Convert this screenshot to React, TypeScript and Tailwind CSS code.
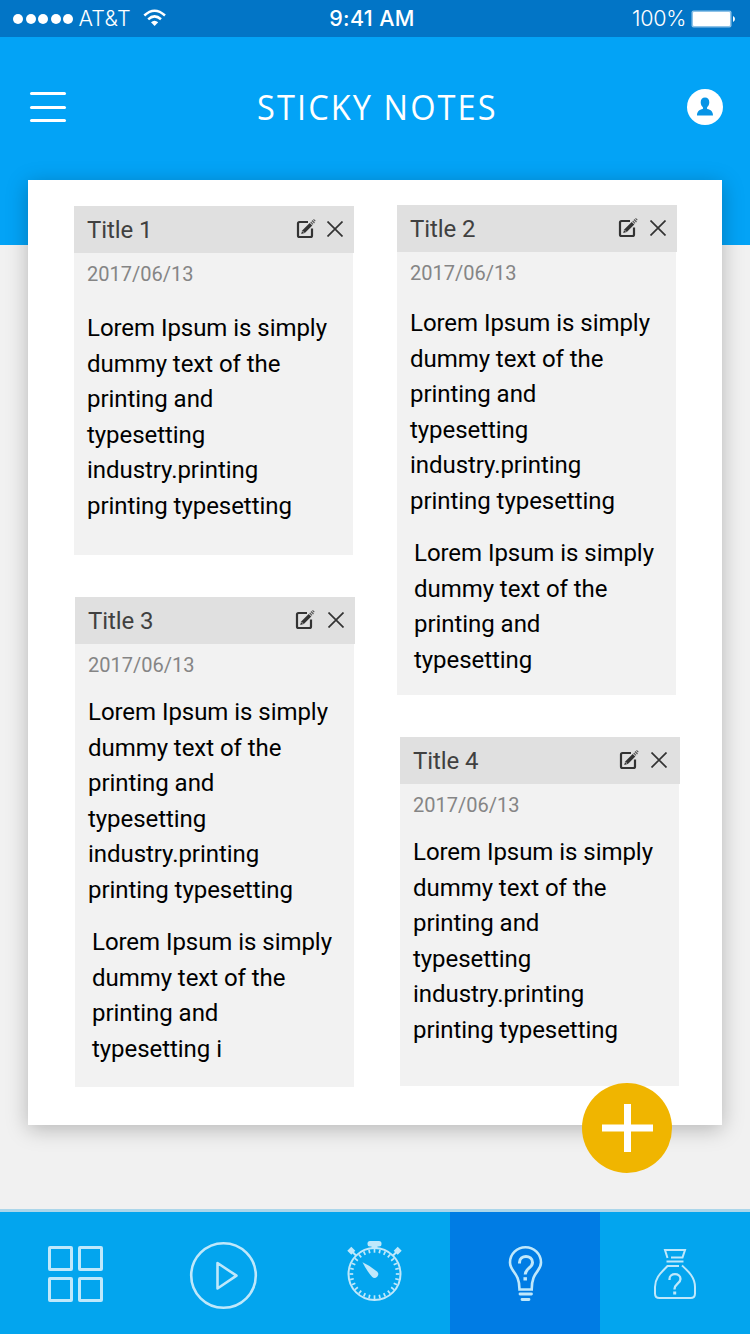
import React from "react";

const LOREM = [
  "Lorem Ipsum is simply",
  "dummy text of the",
  "printing and",
  "typesetting",
  "industry.printing",
  "printing typesetting",
];

function Lines({ lines, className = "" }: { lines: string[]; className?: string }) {
  return (
    <p className={`text-[24px] leading-[35.6px] tracking-[-0.05px] whitespace-nowrap text-black ${className}`}>
      {lines.map((line, i) => (
        <span key={i} className="block">
          {line}
        </span>
      ))}
    </p>
  );
}

function EditIcon() {
  return (
    <svg width="20" height="20" viewBox="0 0 20 20" fill="none" className="shrink-0">
      <path
        d="M12 3H3.500A1.500 1.500 0 0 0 2 4.500V16.500A1.500 1.500 0 0 0 3.500 18H14.500A1.500 1.500 0 0 0 16 16.500V9.500"
        stroke="#333"
        strokeWidth="2.200"
      />
      <path d="M5.200 15l1-3.500 7.500-7.500 2.600 2.600-7.500 7.500z" fill="#333" />
      <path d="M14.700 3l2.300 2.300M16 1.500l2.500 2.500M17.500 .4l1.800 1.800" stroke="#555" strokeWidth="1.100" />
      <path d="M6.200 11.800l2 2" stroke="#e0e0e0" strokeWidth=".8" />
    </svg>
  );
}

function CloseIcon() {
  return (
    <svg width="16" height="16" viewBox="0 0 16 16" fill="none" className="shrink-0">
      <path d="M.5 .5l15 15M15.500 .5l-15 15" stroke="#333" strokeWidth="1.700" />
    </svg>
  );
}

interface NoteProps {
  title: string;
  className: string;
  actions: string;
  textTop: string;
  more?: string[];
}

function Note({ title, className, actions, textTop, more }: NoteProps) {
  return (
    <article className={`flex w-[280px] flex-col ${className}`}>
      <header className="flex h-[47px] shrink-0 items-center justify-between bg-[#e0e0e0] pl-[13px]">
        <h2 className="pt-px text-[24px] leading-[47px] tracking-[-0.1px] text-[#404040]">{title}</h2>
        <div className={`flex items-center pb-[2px] ${actions}`}>
          <EditIcon />
          <CloseIcon />
        </div>
      </header>
      <div className="w-[279px] grow bg-[#f2f2f2] pl-[13px]">
        <time className="block pt-[9px] text-[20px] leading-6 text-[#858585]">2017/06/13</time>
        <Lines lines={LOREM} className={textTop} />
        {more && <Lines lines={more} className="mt-[16.4px] ml-1" />}
      </div>
    </article>
  );
}

function StatusBar() {
  return (
    <div className="grid h-[37px] shrink-0 grid-cols-3 items-center bg-[#0275c6] font-['Inter','Liberation_Sans',sans-serif] text-[22px] leading-[37px] text-white">
      <div className="flex items-center pl-[13px]">
        <div className="flex gap-[2.600px]">
          {[0, 1, 2, 3, 4].map((i) => (
            <span key={i} className="size-[10px] rounded-full bg-white" />
          ))}
        </div>
        <span className="ml-[5px] w-[53px] text-[21.500px] font-light tracking-[0.3px]">AT&amp;T</span>
        <svg width="24" height="18" viewBox="0 0 24 18" fill="none" className="mb-[2px] ml-[12px]">
          <path d="M1.300 6.500Q11.500-3 22 6.500M5.200 10.300Q11.500 4.500 18 10.300" stroke="#fff" strokeWidth="2.500" />
          <path d="M8 13.200Q11.500 10.200 15.200 13.200L11.600 17z" fill="#fff" />
        </svg>
      </div>
      <span className="pr-[6px] text-center text-[21.500px] font-medium tracking-[0.35px]">9:41 AM</span>
      <div className="flex items-center justify-end pr-[15px]">
        <span className="text-[21.500px] font-light tracking-[-0.3px]">100%</span>
        <svg width="44" height="18" viewBox="0 0 44 18" className="ml-[5px]">
          <rect x=".5" y=".5" width="40" height="17" rx="2" fill="#8fc3e8" />
          <rect x="2" y="2" width="37" height="14" rx="1" fill="#fff" />
          <path d="M42 6q2 1 2 3t-2 3z" fill="#fff" />
        </svg>
      </div>
    </div>
  );
}

function GridIcon() {
  return (
    <svg width="150" height="122" viewBox="0 0 150 122" fill="none" stroke="#bfe8fb" strokeWidth="3">
      <rect x="49.500" y="35.500" width="22" height="22" rx=".5" />
      <rect x="79.500" y="35.500" width="22" height="22" rx=".5" />
      <rect x="49.500" y="66.500" width="22" height="22" rx=".5" />
      <rect x="79.500" y="66.500" width="22" height="22" rx=".5" />
    </svg>
  );
}

function PlayIcon() {
  return (
    <svg width="150" height="122" viewBox="0 0 150 122" fill="none" stroke="#bfe8fb" strokeWidth="2.600">
      <circle cx="73.500" cy="63.500" r="32.300" />
      <path d="M67.500 51v25.500L86.500 63.700z" strokeLinejoin="round" />
    </svg>
  );
}

function StopwatchIcon() {
  const ticks = Array.from({ length: 28 }, (_, i) => i);
  return (
    <svg width="150" height="122" viewBox="0 0 150 122" fill="none" stroke="#bfe8fb">
      <circle cx="74.500" cy="62" r="26" strokeWidth="2" />
      {ticks.map((i) => (
        <path key={i} d="M74.500 37v3.700" strokeWidth="1.700" transform={`rotate(${(i * 360) / 28} 74.500 62)`} />
      ))}
      <rect x="67.500" y="29" width="14" height="5.500" rx="2.500" fill="#bfe8fb" stroke="none" />
      <path d="M71.500 34h6v3h-6z" fill="#bfe8fb" stroke="none" />
      <path d="M56 43.500l-4-4M93 43.500l4-4" strokeWidth="2" />
      <path d="M51.300 34.800l4 4-4 4-4-4zM97.700 34.800l4 4-4 4-4-4z" fill="#bfe8fb" stroke="none" />
      <path d="M62.500 50.200Q70 53.500 77 59.500A3.600 3.600 0 1 1 72 64.800Q66.500 58.500 62.500 50.200z" fill="#bfe8fb" stroke="none" />
    </svg>
  );
}

function BulbIcon() {
  return (
    <svg width="150" height="122" viewBox="0 0 150 122" fill="none" stroke="#bfe8fb" strokeWidth="2.600">
      <path d="M69.500 77.500H81.700C81.700 59 91 60 91 50.500A15.500 15.300 0 0 0 60 50.500C60 60 69.500 60 69.500 77.500z" />
      <path d="M69.500 51.500v-1c0-8 13-8 13 0 0 5.500-7.300 6-7.300 12" strokeWidth="3" />
      <path d="M75.200 65.200v3.300" strokeWidth="3.500" />
      <path d="M70 82h11.500M72 87.500h7" strokeWidth="2.800" strokeLinecap="round" />
    </svg>
  );
}

function BagIcon() {
  return (
    <svg width="150" height="122" viewBox="0 0 150 122" fill="none" stroke="#bfe8fb" strokeWidth="2">
      <path d="M67.500 46L65 38h20l-2.500 7.500H71M66.500 49.500h17" />
      <path d="M79 54H67.500C62 60 55 65 55 75v6.500Q55 86 59.500 86H90.500Q95 86 95 81.500V75C95 65 88 59 82 53.500" />
      <path d="M69.500 68v-1c0-6.500 11-6.500 11 0 0 4.500-6 5-6 10v.5" strokeWidth="2.300" />
      <path d="M74.700 79.500v3" strokeWidth="3" />
    </svg>
  );
}

export default function App() {
  return (
    <main className="flex h-[1334px] w-[750px] flex-col overflow-hidden bg-[#f1f1f1] font-['Roboto','Liberation_Sans',sans-serif]">
      <StatusBar />
      <header className="h-[208px] shrink-0 bg-[#03a3f6]">
        <div className="flex h-[140px] items-center justify-between pr-[27px] pl-[30px]">
          <button aria-label="Menu" className="flex h-[30px] w-9 flex-col justify-between">
            <span className="h-[3px] w-9 rounded-full bg-white" />
            <span className="h-[3px] w-9 rounded-full bg-white" />
            <span className="h-[3px] w-9 rounded-full bg-white" />
          </button>
          <h1 className="scale-x-[0.93] pl-[2px] font-['Open_Sans','Noto_Sans',sans-serif] text-[35px] tracking-[2.250px] text-white">
            STICKY NOTES
          </h1>
          <svg width="36" height="36" viewBox="0 0 36 36" aria-label="Profile">
            <circle cx="18" cy="18" r="18" fill="#fff" />
            <path
              d="M18 8.500c2.700 0 4.300 2 4.300 4.800 0 2-.9 4-2.200 5v1.700c3.800.8 5.900 2.500 5.900 6.500H10c0-4 2.100-5.700 5.900-6.500v-1.700c-1.300-1-2.200-3-2.200-5 0-2.800 1.600-4.800 4.300-4.800z"
              fill="#0794e6"
            />
          </svg>
        </div>
      </header>

      <section className="relative mx-7 -mt-[65px] flex h-[945px] shrink-0 bg-white pl-[46px] shadow-[0_4px_20px_rgba(0,0,0,0.25)]">
        <div className="flex w-[323px] flex-col pt-[26px]">
          <Note title="Title 1" className="h-[349px]" actions="gap-[11px] pr-[11px]" textTop="mt-[25px]" />
          <Note
            title="Title 3"
            className="mt-[42px] ml-px h-[490px]"
            actions="gap-[13px] pr-[11px]"
            textTop="mt-[18px]"
            more={["Lorem Ipsum is simply", "dummy text of the", "printing and", "typesetting i"]}
          />
        </div>
        <div className="flex flex-col pt-[25px]">
          <Note
            title="Title 2"
            className="h-[490px]"
            actions="gap-[12px] pr-[11px]"
            textTop="mt-[21px]"
            more={LOREM.slice(0, 4)}
          />
          <Note title="Title 4" className="mt-[42px] ml-[3px] h-[349px]" actions="gap-[12px] pr-[13px]" textTop="mt-[18px]" />
        </div>
        <button
          aria-label="Add note"
          className="absolute right-[50px] -bottom-12 flex size-[90px] items-center justify-center rounded-full bg-[#f0b500]"
        >
          <svg width="52" height="50" viewBox="0 0 52 50">
            <path d="M1 25h51M26.500 1v48" stroke="#fff" strokeWidth="7" />
          </svg>
        </button>
      </section>

      <nav className="mt-auto grid h-[125px] shrink-0 grid-cols-5 border-t-[3px] border-[#acd6ea] bg-[#03a5ee]">
        <GridIcon />
        <PlayIcon />
        <StopwatchIcon />
        <div className="bg-[#007ce4]">
          <BulbIcon />
        </div>
        <BagIcon />
      </nav>
    </main>
  );
}
